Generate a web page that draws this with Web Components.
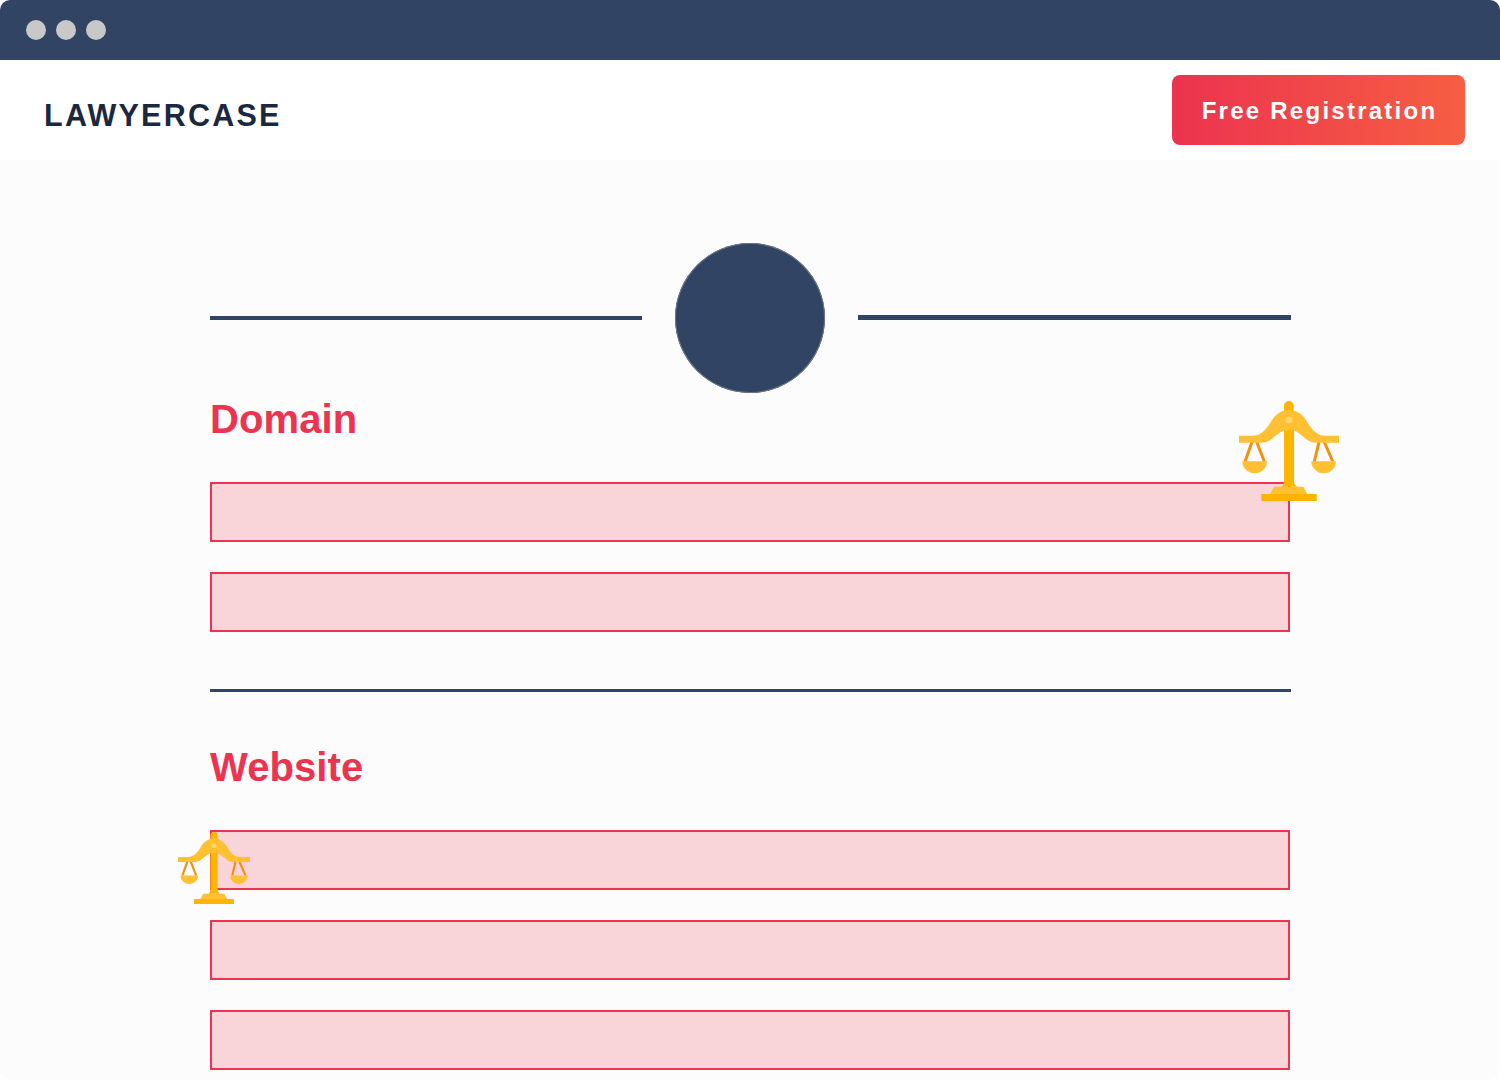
<!DOCTYPE html>
<html lang="en"><head><meta charset="utf-8"><title>Lawyercase</title>
<style>html,body{margin:0;padding:0;background:#fff;height:1080px;overflow:hidden}</style></head>
<body>
<template id="t-scale">
<style>:host{display:block;position:absolute;width:var(--s,100px);height:var(--s,100px)}svg{display:block;width:100%;height:100%}</style>
<svg viewBox="0 0 100 100" aria-hidden="true">
<path d="M13 41 6 60.5M17.7 41 25.3 60.5M80 41 75.3 60.5M85.3 41 93.7 60.5" stroke="#f58f0c" stroke-width="3" fill="none"/>
<path d="M3.3 60.3H28a12.35 12 0 0 1-24.7 0ZM72.3 60.3H97a12.35 12 0 0 1-24.7 0Z" fill="#ffc033"/>
<path d="M35 85.7H64.3L68.3 93H31Z" fill="#ffc033"/>
<path d="M45 20V80Q45 84 42 85.7H58.3Q55 84 55 80V20ZM22.3 93H77.7V100H22.3Z" fill="#ffb400"/>
<path d="M45 12V4.85a4.85 4.85 0 0 1 9.7 0V12Z" fill="#ffb400"/>
<path d="M0 34.7H14C26 34.7 30 22 36 15C40 11 45 9 50 9C55 9 60 11 64 15C70 22 74 34.7 86 34.7H100V41.7H76C68 41.7 64 33 55 29.5H45C36 33 32 41.7 24 41.7H0Z" fill="#ffc033"/>
<circle cx="50" cy="19" r="3.3" fill="#ffd76e"/>
</svg>
</template>
<template id="t-browser">
<style>
:host{display:block;width:1500px;height:1080px;position:relative;overflow:hidden;border-radius:10px;font-family:"Liberation Sans",Arial,sans-serif}
.bar{height:60px;background:#324463;display:flex;align-items:center;gap:10px;padding-left:26px;box-sizing:border-box}
.bar i{width:20px;height:20px;border-radius:50%;background:#c8c8c8;display:block}
</style>
<div class="bar"><i></i><i></i><i></i></div>
<slot></slot>
</template>
<template id="t-nav">
<style>
:host{display:flex;height:100px;background:#fff;justify-content:space-between;box-sizing:border-box;padding:15px 35px 15px 44px}
.logo{font-size:30.5px;font-weight:700;letter-spacing:2.25px;color:#1a2840;line-height:30px;margin-top:25px}
.btn{width:293px;height:70px;border-radius:8px;background:linear-gradient(90deg,#ec334f,#f65e42);color:#fff;font-size:24px;font-weight:700;letter-spacing:2.25px;display:flex;align-items:center;justify-content:center;padding:2px 0 0 2px;box-sizing:border-box}
</style>
<div class="logo">LAWYERCASE</div><div class="btn">Free Registration</div>
</template>
<template id="t-main">
<style>:host{display:block;height:920px;background:#fcfcfc;box-sizing:border-box;padding:83px 210px 0;position:relative}</style>
<slot></slot>
</template>
<template id="t-head">
<style>
:host{display:flex;align-items:center;height:150px;margin-right:-1px}
.l{height:4px;flex:0 0 432px;background:#324463}
.r{height:5px;flex:0 0 433px;background:#324463;margin-top:-1px}
.c{width:150px;height:150px;border-radius:50%;background:#324463;box-shadow:inset 0 0 0 1px #6b7688;margin:0 33px;flex:none}
</style>
<div class="l"></div><div class="c"></div><div class="r"></div>
</template>
<template id="t-section">
<style>
:host{display:block}
h2{margin:0;font-size:40px;line-height:46px;font-weight:700;color:#ec3350;letter-spacing:.1px}
.f{display:flex;flex-direction:column;gap:30px;margin-top:40px}
</style>
<h2><slot name="title"></slot></h2><div class="f"><slot></slot></div>
</template>
<template id="t-field">
<style>:host{display:block;height:60px;box-sizing:border-box;border:2px solid #ec3350;background:#f9d5d9}</style>
</template>
<template id="t-rule">
<style>:host{display:block;height:3px;background:#324463;margin-right:-1px}</style>
</template>

<law-browser>
  <law-nav></law-nav>
  <law-main>
    <law-head></law-head>
    <law-section style="margin-top:3px">
      <span slot="title">Domain</span>
      <law-field></law-field>
      <law-field></law-field>
    </law-section>
    <law-rule style="margin-top:57px"></law-rule>
    <law-section style="margin-top:52px">
      <span slot="title">Website</span>
      <law-field></law-field>
      <law-field></law-field>
      <law-field></law-field>
    </law-section>
    <law-scale style="left:1239px;top:241px;--s:100px"></law-scale>
    <law-scale style="left:178px;top:672px;--s:72px"></law-scale>
  </law-main>
</law-browser>
<script>
for (const [tag,id] of [['law-scale','t-scale'],['law-browser','t-browser'],['law-nav','t-nav'],['law-main','t-main'],['law-head','t-head'],['law-section','t-section'],['law-field','t-field'],['law-rule','t-rule']]) {
  customElements.define(tag, class extends HTMLElement {
    constructor(){super();this.attachShadow({mode:'open'}).appendChild(document.getElementById(id).content.cloneNode(true));}
  });
}
</script>
</body></html>
